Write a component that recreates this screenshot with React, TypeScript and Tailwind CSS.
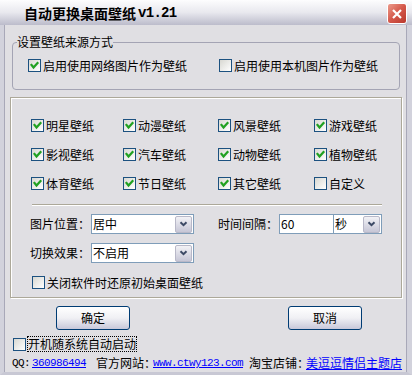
import type { ReactNode } from 'react';

const CJK = '[font-family:"Noto_Sans_CJK_SC","Noto_Sans",sans-serif]';
const MONO = '[font-family:"Liberation_Mono","DejaVu_Sans_Mono",monospace]';

const WALLPAPERS = [
  { label: '明星壁纸', checked: true },
  { label: '动漫壁纸', checked: true },
  { label: '风景壁纸', checked: true },
  { label: '游戏壁纸', checked: true },
  { label: '影视壁纸', checked: true },
  { label: '汽车壁纸', checked: true },
  { label: '动物壁纸', checked: true },
  { label: '植物壁纸', checked: true },
  { label: '体育壁纸', checked: true },
  { label: '节日壁纸', checked: true },
  { label: '其它壁纸', checked: true },
  { label: '自定义', checked: false },
];

function CheckBox({ checked }: { checked: boolean }) {
  return (
    <span className="flex h-[13px] w-[13px] shrink-0 items-center justify-center border border-[#1c5180] bg-gradient-to-br from-[#d8d8d2] to-white">
      {checked && (
        <svg width="11" height="11" viewBox="0 0 11 11">
          <path d="M2.5 5 L4.5 7.5 L8.5 3" fill="none" stroke="#21a121" strokeWidth="2.2" strokeLinecap="square" />
        </svg>
      )}
    </span>
  );
}

function Check({ checked, children, className = '' }: { checked: boolean; children: ReactNode; className?: string }) {
  return (
    <label className={`flex h-[13px] items-center gap-[2px] ${className}`}>
      <CheckBox checked={checked} />
      <span className="leading-[12px]">{children}</span>
    </label>
  );
}

function DropButton() {
  return (
    <span className="flex h-[17px] w-[17px] shrink-0 items-center justify-center rounded-[2px] border border-[#b8b8c8] bg-gradient-to-b from-[#f2f2f6] to-[#c6c6d6]">
      <svg width="9" height="6" viewBox="0 0 9 6">
        <path d="M1.5 1.2 L4.5 4.2 L7.5 1.2" fill="none" stroke="#3d4a66" strokeWidth="2" />
      </svg>
    </span>
  );
}

function Select({ value, className }: { value: string; className: string }) {
  return (
    <div className={`flex h-[20px] items-center justify-between border border-[#7f9db9] bg-white pl-[1px] pr-[1px] ${className}`}>
      <span className="leading-[12px]">{value}</span>
      <DropButton />
    </div>
  );
}

function XpButton({ children, className }: { children: ReactNode; className: string }) {
  return (
    <button
      type="button"
      className={`flex h-[24px] w-[74px] items-center justify-center rounded-[3px] border border-[#003c74] bg-gradient-to-b from-white via-[#f0f0f4] to-[#c8c8da] leading-[12px] ${className}`}
    >
      {children}
    </button>
  );
}

export default function App() {
  return (
    <div className={`flex h-[375px] w-[412px] flex-col overflow-hidden bg-[#e0dfe3] text-[12px] text-black ${CJK}`}>
      <div className="flex h-[25px] shrink-0 bg-gradient-to-b from-[#fdfdfe] via-[#e8e8ee] to-[#bcbccb]">
        <div className="flex flex-1 items-center pl-[24px] pt-[1px] text-[14px] font-bold leading-[14px]">
          自动更换桌面壁纸<span className={`ml-[2px] ${MONO} tracking-[-0.7px]`}> v1.21</span>
        </div>
        <div className="mr-[5px] mt-[3px] flex h-[21px] w-[20px] items-center justify-center rounded-[3px] border border-white bg-gradient-to-br from-[#eb9a8c] via-[#d4574a] to-[#b9382c]">
          <svg width="12" height="12" viewBox="0 0 12 12">
            <path d="M2 2 L10 10 M10 2 L2 10" stroke="white" strokeWidth="2.2" />
          </svg>
        </div>
      </div>

      <div className="flex flex-1 flex-col border-b-[3px] border-l-[4px] border-r-[5px] border-b-[#c8c8d4] border-l-[#d2d2dc] border-r-[#d2d2dc] shadow-[inset_1px_0_0_#a8a8b8,inset_-1px_0_0_#a8a8b8]">
        <fieldset className="ml-[8px] mr-[7px] mt-[11px] h-[54px] rounded-[4px] border border-[#a4a4b4]">
          <legend className="ml-[4px] leading-[12px]">设置壁纸来源方式</legend>
          <div className="flex pl-[15px] pt-[11px]">
            <Check checked className="w-[191px]">启用使用网络图片作为壁纸</Check>
            <Check checked={false}>启用使用本机图片作为壁纸</Check>
          </div>
        </fieldset>

        <div className="ml-[6px] mt-[7px] h-[201px] w-[392px] border border-[#aca899] pl-[20px] pt-[21px] shadow-[inset_1px_1px_0_#fff,1px_1px_0_#fff]">
          <div className="grid grid-cols-[92px_95px_96px_1fr] gap-y-[16px]">
            {WALLPAPERS.map((w) => (
              <Check key={w.label} checked={w.checked}>
                {w.label}
              </Check>
            ))}
          </div>

          <div className="ml-[1px] mt-[14px] h-[2px] w-[350px] border-b border-t border-b-white border-t-[#aca899]" />

          <div className="ml-[-1px] mt-[8px] flex h-[20px] items-center">
            <span className="w-[61px] leading-[12px]">图片位置：</span>
            <Select value="居中" className="w-[103px]" />
            <span className="ml-[24px] w-[61px] leading-[12px]">时间间隔：</span>
            <div className="flex h-[20px] w-[55px] items-center border border-[#7f9db9] bg-white pl-[1px]">
              <span className="leading-[12px]">60</span>
            </div>
            <Select value="秒" className="w-[48px] border-l-0" />
          </div>

          <div className="ml-[-1px] mt-[9px] flex h-[20px] items-center">
            <span className="w-[61px] leading-[12px]">切换效果：</span>
            <Select value="不启用" className="w-[103px]" />
          </div>

          <Check checked={false} className="ml-[1px] mt-[13px]">
            关闭软件时还原初始桌面壁纸
          </Check>
        </div>

        <div className="mt-[8px] flex">
          <XpButton className="ml-[52px]">确定</XpButton>
          <XpButton className="ml-[158px]">取消</XpButton>
        </div>

        <div className="ml-[9px] mt-[6px] flex h-[16px] items-center gap-[1px]">
          <CheckBox checked={false} />
          <span className="flex h-[16px] items-center px-[1px] leading-[12px] outline outline-1 outline-dotted outline-black [outline-offset:-1px]">
            开机随系统自动启动
          </span>
        </div>

        <div className="ml-[8px] mt-[4px] flex h-[14px] items-center leading-[12px]">
          <span className={`w-[20px] text-[11px] font-normal ${MONO} tracking-[-0.6px]`}>QQ:</span>
          <span className={`w-[64px] text-[11px] text-[#0000ff] underline ${MONO} tracking-[-0.6px]`}>360986494</span>
          <span className="w-[57px] whitespace-nowrap">官方网站：</span>
          <span className={`w-[96px] text-[11px] text-[#0000ff] underline ${MONO} tracking-[-0.6px]`}>www.ctwy123.com</span>
          <span className="w-[57px] whitespace-nowrap">淘宝店铺：</span>
          <span className="whitespace-nowrap text-[#0000ff] underline">美逗逗情侣主题店</span>
        </div>
      </div>
    </div>
  );
}
